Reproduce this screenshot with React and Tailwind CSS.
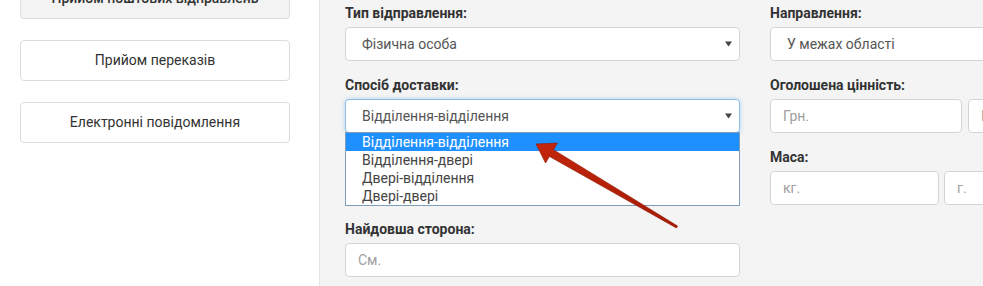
import { useState } from "react";

const font = { fontFamily: "Roboto, 'Noto Sans', sans-serif" };

const Caret = () => (
    <svg width="7" height="6" viewBox="0 0 7 6" className="shrink-0">
        <path d="M0 0.5h7L3.5 5.5z" fill="#444" />
    </svg>
);

const Label = ({ children }) => (
    <div className="h-5 text-[14px] font-bold leading-5 text-[#333]">{children}</div>
);

const SelectBox = ({ value, focused, arrow = true }) => (
    <div
        className={
            "flex h-[34px] items-center justify-between rounded bg-white pl-[16px] pr-[7px] text-[14px] text-[#555] border " +
            (focused ? "border-[#8fbde6] shadow-[0_0_4px_rgba(102,175,233,0.5)]" : "border-[#d4d4d4]")
        }
    >
        <span className="whitespace-nowrap">{value}</span>
        {arrow && <Caret />}
    </div>
);

const Input = ({ placeholder, className = "" }) => (
    <input
        placeholder={placeholder}
        className={
            "h-[34px] rounded border border-[#d4d4d4] bg-white px-3 text-[14px] text-[#555] placeholder:text-[#a0a0a0] outline-none " +
            className
        }
    />
);

const Field = ({ label, children }) => (
    <div className="flex flex-col gap-1">
        <Label>{label}</Label>
        {children}
    </div>
);

const deliveryOptions = ["Відділення-відділення", "Відділення-двері", "Двері-відділення", "Двері-двері"];

const SideButton = ({ children, active }) => (
    <button
        className={
            "flex h-[41px] w-[270px] items-center justify-center rounded border border-[#dcdcdc] text-[14px] text-[#333] " +
            (active ? "bg-[#f3f3f3] font-medium" : "bg-white")
        }
    >
        {children}
    </button>
);

export default function App() {
    const [delivery] = useState(deliveryOptions[0]);

    return (
        <div className="relative flex h-[286px] w-[983px] overflow-hidden bg-[#f4f4f4]" style={font}>
            {/* Sidebar */}
            <aside className="flex w-[320px] shrink-0 flex-col border-r border-[#e6e6e6] bg-white pl-5">
                <div className="-mt-[22px] flex flex-col gap-[21px]">
                    <SideButton active>Прийом поштових відправлень</SideButton>
                    <SideButton>Прийом переказів</SideButton>
                    <SideButton>Електронні повідомлення</SideButton>
                </div>
            </aside>

            {/* Form */}
            <main className="flex gap-[30px] pl-[25px] pt-[3px]">
                <div className="flex w-[395px] shrink-0 flex-col gap-[14px]">
                    <Field label="Тип відправлення:">
                        <SelectBox value="Фізична особа" />
                    </Field>
                    <div className="relative">
                        <Field label="Спосіб доставки:">
                            <SelectBox value={delivery} focused />
                        </Field>
                        <ul className="absolute left-0 right-0 top-full z-10 -mt-px border border-[#7f9db9] bg-white text-[14px] leading-[18px] text-[#444]">
                            {deliveryOptions.map((opt) => (
                                <li
                                    key={opt}
                                    className={
                                        "pl-4 " + (opt === delivery ? "bg-[#1e90ff] text-white" : "")
                                    }
                                >
                                    {opt}
                                </li>
                            ))}
                        </ul>
                    </div>
                    {/* row hidden under the open list */}
                    <div className="h-[58px]" />
                    <Field label="Найдовша сторона:">
                        <Input placeholder="См." className="w-full" />
                    </Field>
                </div>

                <div className="flex w-[395px] shrink-0 flex-col gap-[14px]">
                    <Field label="Направлення:">
                        <SelectBox value="У межах області" />
                    </Field>
                    <Field label="Оголошена цінність:">
                        <div className="flex gap-[6px]">
                            <Input placeholder="Грн." className="w-[192px]" />
                            <Input placeholder="Коп." className="w-[192px]" />
                        </div>
                    </Field>
                    <Field label="Маса:">
                        <div className="flex gap-[5px]">
                            <Input placeholder="кг." className="w-[169px]" />
                            <Input placeholder="г." className="w-[169px]" />
                        </div>
                    </Field>
                </div>
            </main>

            {/* Annotation arrow */}
            <svg
                className="pointer-events-none absolute left-[530px] top-[135px] z-20"
                width="155"
                height="100"
                viewBox="0 0 155 100"
            >
                <defs>
                    <linearGradient id="arr" x1="0" y1="0" x2="1" y2="1">
                        <stop offset="0" stopColor="#c3260b" />
                        <stop offset="1" stopColor="#a51a05" />
                    </linearGradient>
                </defs>
                <polygon
                    points="6,9 27.5,8 23.5,14.7 147.6,91 146.4,93 19.5,21.5 15.5,28"
                    fill="url(#arr)"
                    stroke="#8f1702"
                    strokeWidth="0.6"
                    strokeLinejoin="round"
                />
            </svg>
        </div>
    );
}
